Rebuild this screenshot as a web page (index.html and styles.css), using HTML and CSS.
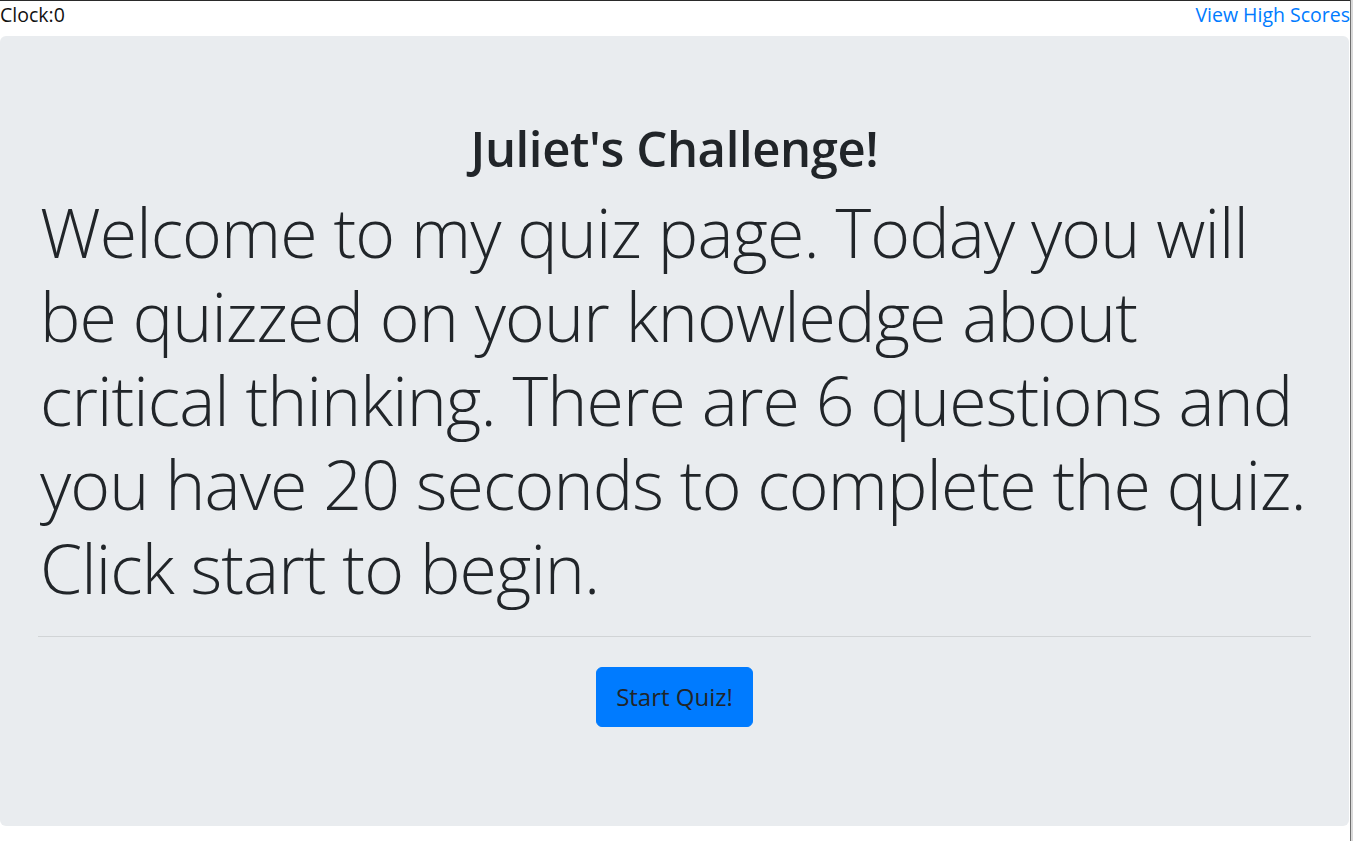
FILE: index.html
```html
<!DOCTYPE html>
<html lang="en">
<head>
<meta charset="utf-8">
<title>Juliet's Challenge</title>
<link rel="stylesheet" href="styles.css">
</head>
<body>
<div class="page">
  <header class="topbar">
    <span class="clock">Clock:0</span>
    <a class="scores" href="#">View High Scores</a>
  </header>
  <main class="jumbotron">
    <h1 class="title">Juliet's Challenge!</h1>
    <p class="display">Welcome to my quiz page. Today you will<br>be quizzed on your knowledge about<br>critical thinking. There are 6 questions and<br>you have 20 seconds to complete the quiz.<br>Click start to begin.</p>
    <hr class="divider">
    <p class="actions"><button class="start" type="button">Start Quiz!</button></p>
  </main>
</div>
<div class="edge"></div>
</body>
</html>
```

FILE: styles.css
```css
html, body {
  margin: 0;
  padding: 0;
  background: #ffffff;
}

body {
  display: flex;
  height: 841px;
  overflow: hidden;
  font-family: "Open Sans", "Noto Sans", sans-serif;
  color: #212529;
  font-size: 20px;
}

.page {
  flex: 1;
  border-top: 1px solid #2a2a2a;
  display: flex;
  flex-direction: column;
}

.edge {
  width: 2px;
  border-left: 1px solid #6f6f6f;
  background: #d9d9d9;
}

.topbar {
  display: flex;
  justify-content: space-between;
  align-items: flex-start;
  height: 35px;
  line-height: 28px;
  font-size: 19.5px;
}

.clock {
  color: #111;
}

.scores {
  color: #007bff;
  text-decoration: none;
}

.jumbotron {
  background: #e9ecef;
  border-radius: 6px;
  margin-right: 1px;
  padding: 80px 40px 0;
  height: 710px;
}

.title {
  margin: 0 0 10px;
  text-align: center;
  font-size: 49px;
  font-weight: 600;
  line-height: 64px;
  letter-spacing: -0.4px;
}

.display {
  margin: 0;
  font-size: 68px;
  font-weight: 300;
  line-height: 84px;
  white-space: nowrap;
  letter-spacing: -0.9px;
}

.divider {
  margin: 26px -2px 30px;
  border: 0;
  border-top: 1px solid rgba(0, 0, 0, 0.1);
}

.actions {
  margin: 0;
  text-align: center;
}

.start {
  font-family: inherit;
  font-size: 24px;
  color: #212529;
  background: #007bff;
  border: 1px solid #007bff;
  border-radius: 6px;
  padding: 10px 19px;
  line-height: 38px;
}
```
